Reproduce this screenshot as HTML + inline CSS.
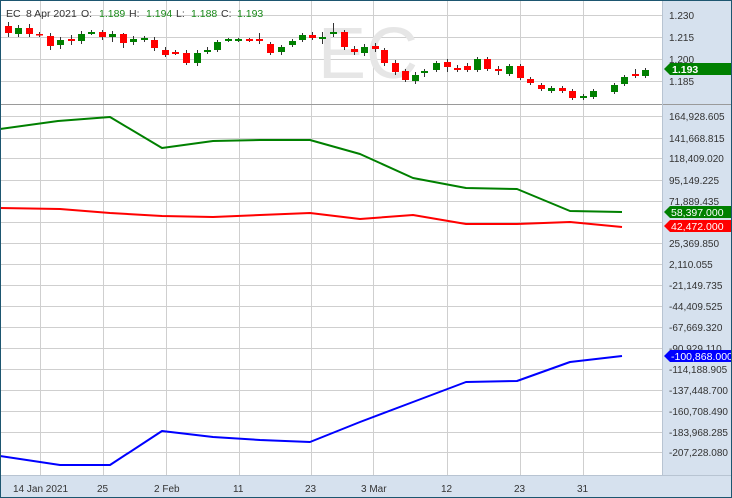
<!DOCTYPE html><html><head><meta charset="utf-8"><style>
body{margin:0;width:732px;height:498px;overflow:hidden;background:#fff}
svg{display:block;font-family:"Liberation Sans",sans-serif}
</style></head><body>
<svg width="732" height="498" viewBox="0 0 732 498">
<rect x="0" y="0" width="732" height="498" fill="#fff"/>
<rect x="662" y="0" width="70" height="498" fill="#d6e1ee"/>
<rect x="0" y="475" width="732" height="23" fill="#d6e1ee"/>
<g stroke="#cfcfcf" stroke-width="1">
<path d="M40.5 0V475M103.5 0V475M166.5 0V475M239.5 0V475M311.5 0V475M373.5 0V475M447.5 0V475M520.5 0V475M583.5 0V475"/>
<path d="M0 15.5H662M0 37.5H662M0 59.5H662M0 81.5H662"/>
<path d="M0 116.5H662M0 138.5H662M0 158.5H662M0 180.5H662M0 201.5H662M0 222.5H662M0 243.5H662M0 264.5H662M0 285.5H662M0 306.5H662M0 327.5H662M0 348.5H662M0 369.5H662M0 390.5H662M0 411.5H662M0 432.5H662M0 452.5H662"/>
</g>
<line x1="0" y1="104.5" x2="732" y2="104.5" stroke="#9a9a9a"/>
<line x1="0" y1="475.5" x2="732" y2="475.5" stroke="#b8c4d2"/>
<line x1="662.5" y1="0" x2="662.5" y2="475" stroke="#b8c4d2"/>
<text x="318" y="78" font-size="72" fill="#e6e6e6">EC</text>
<g font-size="10.5" fill="#333">
<text x="6" y="17">EC</text><text x="26" y="17">8 Apr 2021</text><text x="81" y="17">O:</text><text x="129" y="17">H:</text><text x="176" y="17">L:</text><text x="221" y="17">C:</text>
</g>
<g font-size="10.5" fill="#1a8a1a"><text x="99" y="17">1.189</text><text x="146" y="17">1.194</text><text x="191" y="17">1.188</text><text x="237" y="17">1.193</text></g>
<g stroke="#333" stroke-width="1">
<path d="M8.5 22V37M18.5 25V37M29.5 24V37M39.5 32V37M50.5 33V50M60.5 37V49M71.5 35V45M81.5 31V44M91.5 30V35M102.5 30V40M112.5 31V42M123.5 33V48M133.5 36V45M144.5 36V42M154.5 37V51M165.5 47V57M175.5 50V55M186.5 50V65M197.5 50V66M207.5 47V54M217.5 40V52M228.5 38V42M238.5 38V42M249.5 38V42M259.5 33V44M270.5 42V55M281.5 45V55M292.5 39V47M302.5 33V42M312.5 32V40M322.5 32V44M333.5 23V37M344.5 30V50M354.5 46V55M364.5 44V56M375.5 43V52M384.5 48V66M395.5 60V75M405.5 69V82M415.5 72V84M424.5 69V77M436.5 61V72M447.5 59V72M457.5 65V72M467.5 63V72M477.5 57V72M487.5 57V71M498.5 66V75M509.5 64V76M520.5 64V80M530.5 77V85M541.5 83V91M551.5 86V93M562.5 86V93M572.5 89V100M583.5 94V100M593.5 89V99M614.5 83V94M624.5 75V86M635.5 69V78M645.5 68V78"/>
</g>
<g fill="#ff0000">
<rect x="5" y="26" width="7" height="7"/><rect x="26" y="28" width="7" height="6"/><rect x="36" y="34" width="7" height="1.5"/><rect x="47" y="36" width="7" height="10"/><rect x="68" y="39" width="7" height="2"/><rect x="99" y="32" width="7" height="5"/><rect x="120" y="34" width="7" height="9"/><rect x="151" y="40" width="7" height="8"/><rect x="162" y="50" width="7" height="5"/><rect x="172" y="52" width="7" height="2"/><rect x="183" y="53" width="7" height="10"/><rect x="246" y="39" width="7" height="2"/><rect x="256" y="39" width="7" height="2"/><rect x="267" y="44" width="7" height="9"/><rect x="309" y="35" width="7" height="3"/><rect x="341" y="32" width="7" height="15"/><rect x="351" y="49" width="7" height="3"/><rect x="372" y="46" width="7" height="3"/><rect x="381" y="50" width="7" height="13"/><rect x="392" y="63" width="7" height="9"/><rect x="402" y="71" width="7" height="9"/><rect x="444" y="62" width="7" height="5"/><rect x="454" y="68" width="7" height="2"/><rect x="464" y="66" width="7" height="4"/><rect x="484" y="59" width="7" height="10"/><rect x="495" y="69" width="7" height="2"/><rect x="517" y="66" width="7" height="12"/><rect x="527" y="79" width="7" height="4"/><rect x="538" y="85" width="7" height="4"/><rect x="559" y="88" width="7" height="3"/><rect x="569" y="91" width="7" height="7"/><rect x="632" y="74" width="7" height="2"/>
</g>
<g fill="#008000">
<rect x="15" y="28" width="7" height="6"/><rect x="57" y="40" width="7" height="5"/><rect x="78" y="34" width="7" height="7"/><rect x="88" y="32" width="7" height="2"/><rect x="109" y="34" width="7" height="3"/><rect x="130" y="39" width="7" height="3"/><rect x="141" y="38" width="7" height="2"/><rect x="194" y="53" width="7" height="10"/><rect x="204" y="50" width="7" height="2"/><rect x="214" y="42" width="7" height="8"/><rect x="225" y="39" width="7" height="2"/><rect x="235" y="39" width="7" height="2"/><rect x="278" y="47" width="7" height="5"/><rect x="289" y="41" width="7" height="4"/><rect x="299" y="35" width="7" height="5"/><rect x="319" y="37" width="7" height="2"/><rect x="330" y="32" width="7" height="2"/><rect x="361" y="47" width="7" height="6"/><rect x="412" y="75" width="7" height="6"/><rect x="421" y="71" width="7" height="2"/><rect x="433" y="63" width="7" height="7"/><rect x="474" y="59" width="7" height="11"/><rect x="506" y="66" width="7" height="8"/><rect x="548" y="88" width="7" height="3"/><rect x="580" y="96" width="7" height="2"/><rect x="590" y="91" width="7" height="6"/><rect x="611" y="85" width="7" height="7"/><rect x="621" y="77" width="7" height="7"/><rect x="642" y="70" width="7" height="6"/>
</g>
<g fill="none" stroke-width="2" stroke-linejoin="round">
<polyline stroke="#008000" points="0,129 58,121 110,117 162,148 213,141 260,140 310,140 360,154 413,178 466,188 517,189 570,211 622,212"/>
<polyline stroke="#ff0000" points="0,208 60,209 110,213 162,216 213,217 260,215 310,213 360,219 413,215 466,224 517,224 570,222 622,227"/>
<polyline stroke="#0000ff" points="0,456 60,465 110,465 162,431 213,437 260,440 310,442 360,422 413,402 466,382 517,381 570,362 622,356"/>
</g>
<g font-size="10" fill="#333">
<text x="669" y="19">1.230</text><text x="669" y="41">1.215</text><text x="669" y="63">1.200</text><text x="669" y="85">1.185</text>
<text x="669" y="120">164,928.605</text><text x="669" y="142">141,668.815</text><text x="669" y="162">118,409.020</text><text x="669" y="184">95,149.225</text><text x="669" y="205">71,889.435</text><text x="669" y="247">25,369.850</text><text x="669" y="268">2,110.055</text><text x="669" y="289">-21,149.735</text><text x="669" y="310">-44,409.525</text><text x="669" y="331">-67,669.320</text><text x="669" y="352">-90,929.110</text><text x="669" y="373">-114,188.905</text><text x="669" y="394">-137,448.700</text><text x="669" y="415">-160,708.490</text><text x="669" y="436">-183,968.285</text><text x="669" y="456">-207,228.080</text>
<text x="13" y="492">14 Jan 2021</text><text x="97" y="492">25</text><text x="154" y="492">2 Feb</text><text x="233" y="492">11</text><text x="305" y="492">23</text><text x="361" y="492">3 Mar</text><text x="441" y="492">12</text><text x="514" y="492">23</text><text x="577" y="492">31</text>
</g>
<polygon points="664,69 670,63 732,63 732,75 670,75" fill="#008000"/>
<text x="672" y="73" font-size="10.5" font-weight="bold" fill="#fff">1.193</text>
<polygon points="664,212 670,206 732,206 732,218 670,218" fill="#008000"/>
<text x="671" y="216" font-size="10.5" fill="#fff">58,397.000</text>
<polygon points="664,226 670,220 732,220 732,232 670,232" fill="#ff0000"/>
<text x="671" y="230" font-size="10.5" fill="#fff">42,472.000</text>
<polygon points="664,356 670,350 732,350 732,362 670,362" fill="#0000ff"/>
<text x="671" y="360" font-size="10.5" fill="#fff">-100,868.000</text>
<rect x="0.5" y="0.5" width="731" height="497" fill="none" stroke="#1d5670"/>
</svg>
</body></html>
